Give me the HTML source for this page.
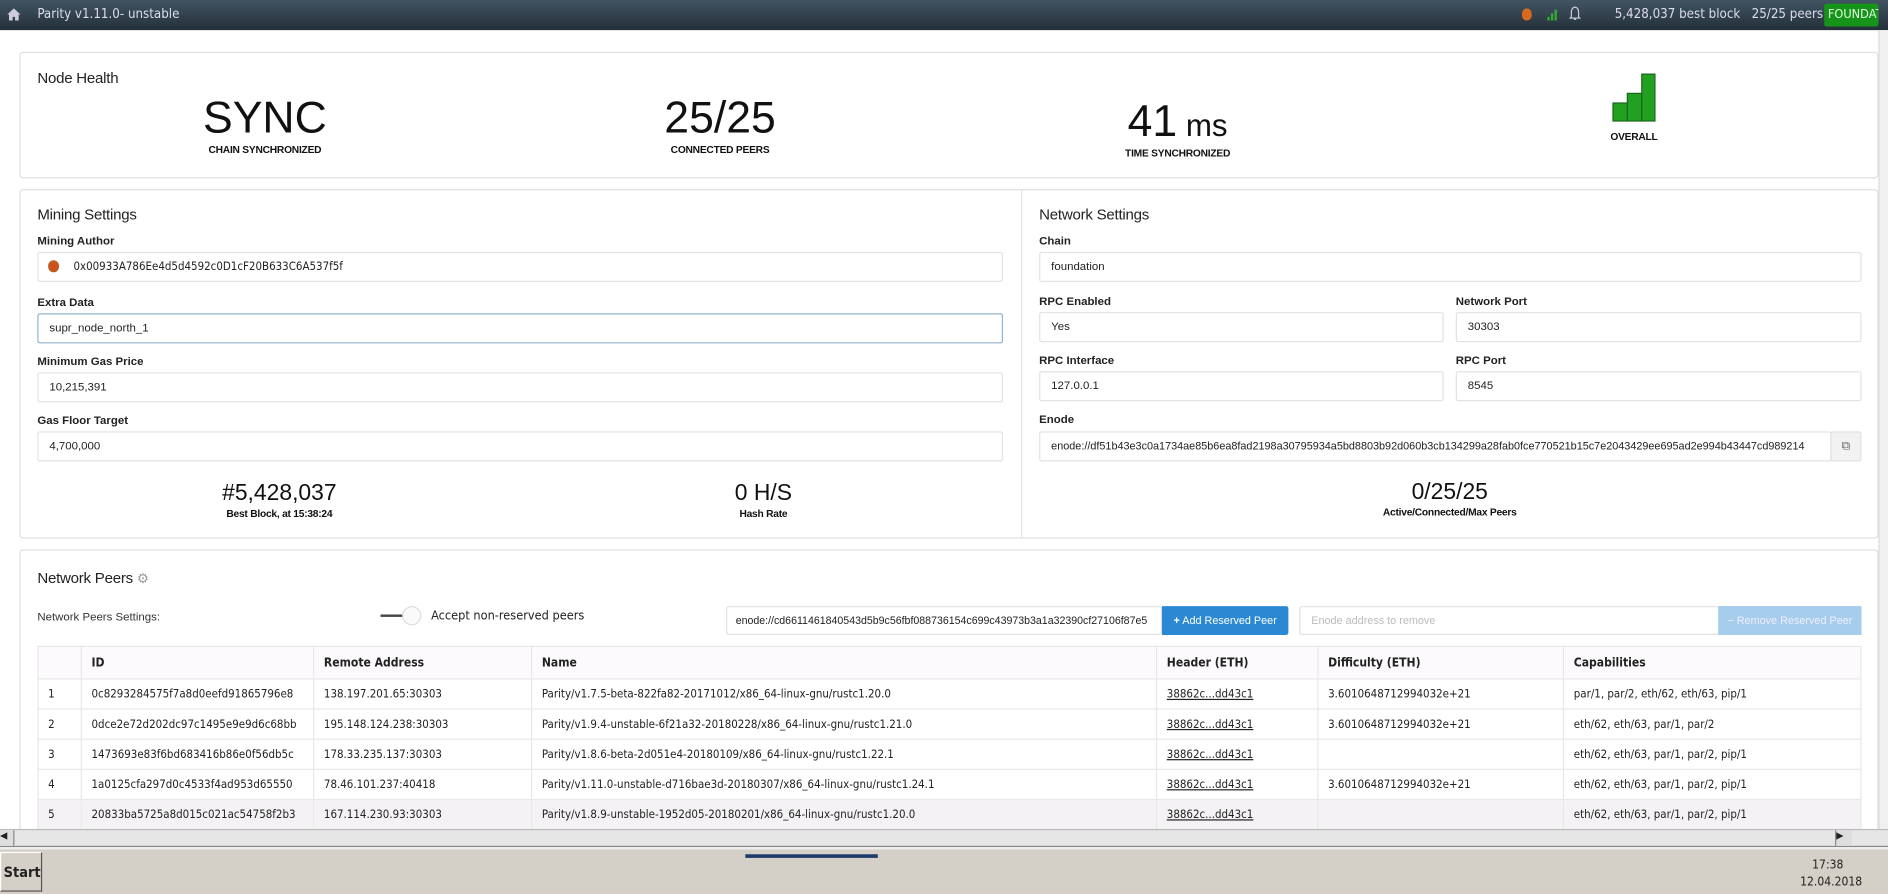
<!DOCTYPE html>
<html><head><meta charset="utf-8">
<style>
*{box-sizing:border-box;margin:0;padding:0}
html,body{width:1888px;height:894px;overflow:hidden;background:#fff}
#w{position:absolute;left:0;top:0;width:1568px;height:742px;overflow:hidden;transform:scale(1.2041,1.2049);transform-origin:0 0;font-family:"Liberation Sans",sans-serif;color:#222;background:#fff}
.a{position:absolute}
.top{left:0;top:0;width:1568px;height:25px;background:linear-gradient(#415463,#243039);color:#dde;font-family:"DejaVu Sans Condensed","DejaVu Sans",sans-serif;font-size:11px}
.card{position:absolute;border:1px solid #e0e0e0;border-radius:3px;background:#fff}
.h{font-size:12.5px;color:#222;letter-spacing:-.2px}
.lbl{font-size:9.5px;font-weight:bold;color:#222}
.inp{position:absolute;border:1px solid #e2e2e2;border-radius:2px;height:25px;font-size:9.5px;line-height:23px;padding-left:9px;color:#222;background:#fff}
.big{position:absolute;text-align:center;font-weight:300;color:#111}
.sm{font-size:8.5px;font-weight:bold;letter-spacing:-.2px}
table{position:absolute;left:31px;top:536px;width:1515px;border-collapse:collapse;font-family:"DejaVu Sans Condensed","DejaVu Sans",sans-serif;font-size:9.5px}
td,th{border:1px solid #e8e8e8;height:25px;padding:0 0 0 8px;text-align:left;white-space:nowrap;overflow:hidden}
th{font-weight:bold;font-size:10px;background:#fcfafc;height:27px}
td u{color:#222}
</style></head><body><div id="w">
<div class="a top">
 <svg class="a" style="left:6px;top:7px" width="11" height="10" viewBox="0 0 11 10"><path d="M5.5 0L0 5h1.5v5h3V7h2v3h3V5H11z" fill="#ccd"/></svg>
 <div class="a" style="left:31px;top:5px">Parity v1.11.0- unstable</div>
 <div class="a" style="left:1264px;top:7px;width:8px;height:10px;border-radius:4px;background:#d86a20"></div>
 <svg class="a" style="left:1284px;top:6px" width="10" height="11"><rect x="1" y="8" width="2" height="3" fill="#3a3"/><rect x="4" y="5" width="2" height="6" fill="#3a3"/><rect x="7" y="2" width="2" height="9" fill="#3a3"/></svg>
 <svg class="a" style="left:1303px;top:5px" width="10" height="13"><path d="M5 1C3 1 2 3 2 5v4L1 10h8L8 9V5C8 3 7 1 5 1zM4 11h2" stroke="#ccd" fill="none"/></svg>
 <div class="a" style="left:1341px;top:5px">5,428,037 best block&nbsp;&nbsp; 25/25 peers</div>
 <div class="a" style="left:1515px;top:3px;width:45px;height:19px;background:#16941a;border-radius:2px;color:#dfd;padding:3px 0 0 3px;overflow:hidden;font-size:10.5px;white-space:nowrap">FOUNDATION</div>
</div>
<div class="a" style="left:1560px;top:25px;width:8px;height:665px;background:#f0f0f0;border-left:1px solid #ddd"></div>

<div class="card" style="left:16px;top:43px;width:1544px;height:105px">
 <div class="a h" style="left:14px;top:14px">Node Health</div>
</div>
<div class="big" style="left:120px;top:78px;width:200px;font-size:37px;line-height:40px">SYNC</div>
<div class="big sm" style="left:120px;top:119px;width:200px">CHAIN SYNCHRONIZED</div>
<div class="big" style="left:498px;top:78px;width:200px;font-size:37px;line-height:40px">25/25</div>
<div class="big sm" style="left:498px;top:119px;width:200px">CONNECTED PEERS</div>
<div class="big" style="left:878px;top:81px;width:200px;font-size:37px;line-height:40px">41<span style="font-size:26px"> ms</span></div>
<div class="big sm" style="left:878px;top:122px;width:200px">TIME SYNCHRONIZED</div>
<svg class="a" style="left:1339px;top:61px" width="36" height="40"><rect x="0.5" y="24.5" width="12" height="15" fill="#22a022" stroke="#186618"/><rect x="12.5" y="16.5" width="12" height="23" fill="#22a022" stroke="#186618"/><rect x="24.5" y="0.5" width="11" height="39" fill="#22a022" stroke="#186618"/></svg>
<div class="big sm" style="left:1307px;top:108px;width:100px">OVERALL</div>

<div class="card" style="left:16px;top:157px;width:1544px;height:290px"></div>
<div class="a" style="left:848px;top:158px;width:1px;height:288px;background:#e4e4e4"></div>
<div class="a h" style="left:31px;top:171px">Mining Settings</div>
<div class="a lbl" style="left:31px;top:195px">Mining Author</div>
<div class="inp" style="left:31px;top:209px;width:802px;padding-left:29px;font-family:'DejaVu Sans Condensed',sans-serif">0x00933A786Ee4d5d4592c0D1cF20B633C6A537f5f</div>
<div class="a" style="left:40px;top:216px;width:9px;height:10px;border-radius:5px;background:radial-gradient(#e04020,#a87020)"></div>
<div class="a lbl" style="left:31px;top:246px">Extra Data</div>
<div class="inp" style="left:31px;top:260px;width:802px;border-color:#8fb4cc">supr_node_north_1</div>
<div class="a lbl" style="left:31px;top:295px">Minimum Gas Price</div>
<div class="inp" style="left:31px;top:309px;width:802px">10,215,391</div>
<div class="a lbl" style="left:31px;top:344px">Gas Floor Target</div>
<div class="inp" style="left:31px;top:358px;width:802px">4,700,000</div>
<div class="big" style="left:132px;top:399px;width:200px;font-size:19px">#5,428,037</div>
<div class="big sm" style="left:132px;top:421px;width:200px">Best Block, at 15:38:24</div>
<div class="big" style="left:534px;top:399px;width:200px;font-size:19px">0 H/S</div>
<div class="big sm" style="left:534px;top:421px;width:200px">Hash Rate</div>

<div class="a h" style="left:863px;top:171px">Network Settings</div>
<div class="a lbl" style="left:863px;top:195px">Chain</div>
<div class="inp" style="left:863px;top:209px;width:683px">foundation</div>
<div class="a lbl" style="left:863px;top:245px">RPC Enabled</div>
<div class="inp" style="left:863px;top:259px;width:336px">Yes</div>
<div class="a lbl" style="left:1209px;top:245px">Network Port</div>
<div class="inp" style="left:1209px;top:259px;width:337px">30303</div>
<div class="a lbl" style="left:863px;top:294px">RPC Interface</div>
<div class="inp" style="left:863px;top:308px;width:336px">127.0.0.1</div>
<div class="a lbl" style="left:1209px;top:294px">RPC Port</div>
<div class="inp" style="left:1209px;top:308px;width:337px">8545</div>
<div class="a lbl" style="left:863px;top:343px">Enode</div>
<div class="inp" style="left:863px;top:358px;width:658px;overflow:hidden;white-space:nowrap;font-size:9px">enode://df51b43e3c0a1734ae85b6ea8fad2198a30795934a5bd8803b92d060b3cb134299a28fab0fce770521b15c7e2043429ee695ad2e994b43447cd989214</div>
<div class="inp" style="left:1520px;top:358px;width:26px;background:#f2f2f2;padding:0;text-align:center;font-size:10px;color:#666">⧉</div>
<div class="big" style="left:1104px;top:398px;width:200px;font-size:19px">0/25/25</div>
<div class="big sm" style="left:1104px;top:420px;width:200px">Active/Connected/Max Peers</div>

<div class="card" style="left:16px;top:456px;width:1544px;height:240px"></div>
<div class="a h" style="left:31px;top:473px">Network Peers <span style="color:#999;font-size:11px">⚙</span></div>
<div class="a lbl" style="left:31px;top:507px;font-weight:normal;color:#333">Network Peers Settings:</div>
<div class="a" style="left:316px;top:510px;width:22px;height:2px;background:#444"></div>
<div class="a" style="left:334px;top:503px;width:16px;height:16px;border-radius:8px;background:#fafafa;border:1px solid #ddd"></div>
<div class="a" style="left:358px;top:505px;font-size:10.5px;font-family:'DejaVu Sans Condensed',sans-serif">Accept non-reserved peers</div>
<div class="inp" style="left:603px;top:503px;width:362px;height:24px;font-size:8.8px;overflow:hidden;white-space:nowrap;padding-left:7px">enode://cd6611461840543d5b9c56fbf088736154c699c43973b3a1a32390cf27106f87e5</div>
<div class="a" style="left:965px;top:503px;width:105px;height:24px;background:#2b89d4;color:#fff;font-size:9px;line-height:24px;text-align:center;border-radius:0 2px 2px 0"><b>+</b> Add Reserved Peer</div>
<div class="inp" style="left:1079px;top:503px;width:349px;height:24px;color:#bbb;font-size:9px">Enode address to remove</div>
<div class="a" style="left:1427px;top:503px;width:119px;height:24px;background:#a7cdec;color:#eef;font-size:9px;line-height:24px;text-align:center">− Remove Reserved Peer</div>
<table>
<tr><th style="width:36px"></th><th style="width:193px">ID</th><th style="width:181px">Remote Address</th><th style="width:519px">Name</th><th style="width:134px">Header (ETH)</th><th style="width:204px">Difficulty (ETH)</th><th>Capabilities</th></tr>
<tr><td>1</td><td>0c8293284575f7a8d0eefd91865796e8</td><td>138.197.201.65:30303</td><td>Parity/v1.7.5-beta-822fa82-20171012/x86_64-linux-gnu/rustc1.20.0</td><td><u>38862c...dd43c1</u></td><td>3.6010648712994032e+21</td><td>par/1, par/2, eth/62, eth/63, pip/1</td></tr>
<tr><td>2</td><td>0dce2e72d202dc97c1495e9e9d6c68bb</td><td>195.148.124.238:30303</td><td>Parity/v1.9.4-unstable-6f21a32-20180228/x86_64-linux-gnu/rustc1.21.0</td><td><u>38862c...dd43c1</u></td><td>3.6010648712994032e+21</td><td>eth/62, eth/63, par/1, par/2</td></tr>
<tr><td>3</td><td>1473693e83f6bd683416b86e0f56db5c</td><td>178.33.235.137:30303</td><td>Parity/v1.8.6-beta-2d051e4-20180109/x86_64-linux-gnu/rustc1.22.1</td><td><u>38862c...dd43c1</u></td><td></td><td>eth/62, eth/63, par/1, par/2, pip/1</td></tr>
<tr><td>4</td><td>1a0125cfa297d0c4533f4ad953d65550</td><td>78.46.101.237:40418</td><td>Parity/v1.11.0-unstable-d716bae3d-20180307/x86_64-linux-gnu/rustc1.24.1</td><td><u>38862c...dd43c1</u></td><td>3.6010648712994032e+21</td><td>eth/62, eth/63, par/1, par/2, pip/1</td></tr>
<tr style="background:#f4f2f4"><td>5</td><td>20833ba5725a8d015c021ac54758f2b3</td><td>167.114.230.93:30303</td><td>Parity/v1.8.9-unstable-1952d05-20180201/x86_64-linux-gnu/rustc1.20.0</td><td><u>38862c...dd43c1</u></td><td></td><td>eth/62, eth/63, par/1, par/2, pip/1</td></tr>
</table>
<div class="a" style="left:0;top:688px;width:1568px;height:15px;background:#e6e6e6;border-top:1px solid #bbb;border-bottom:1px solid #888"></div>
<div class="a" style="left:0;top:689px;width:12px;height:13px;background:#ddd;border-right:1px solid #888;font-size:8px">◀</div>
<div class="a" style="left:1524px;top:689px;width:14px;height:13px;background:#ddd;border-left:1px solid #888;font-size:8px">▶</div>
<div class="a" style="left:0;top:703px;width:1568px;height:39px;background:#d4d0c8;border-top:2px solid #eee"></div>
<div class="a" style="left:0;top:707px;width:35px;height:33px;border:1px solid #fff;border-right-color:#555;border-bottom-color:#555;font-size:12px;font-weight:bold;padding:9px 0 0 2px;font-family:'DejaVu Sans Condensed',sans-serif">Start</div>
<div class="a" style="left:619px;top:709px;width:110px;height:3px;background:#1c3a6a"></div>
<div class="a" style="left:1505px;top:713px;font-size:10px;font-family:'DejaVu Sans Condensed',sans-serif">17:38</div>
<div class="a" style="left:1495px;top:727px;font-size:10px;font-family:'DejaVu Sans Condensed',sans-serif">12.04.2018</div>
</div></body></html>
